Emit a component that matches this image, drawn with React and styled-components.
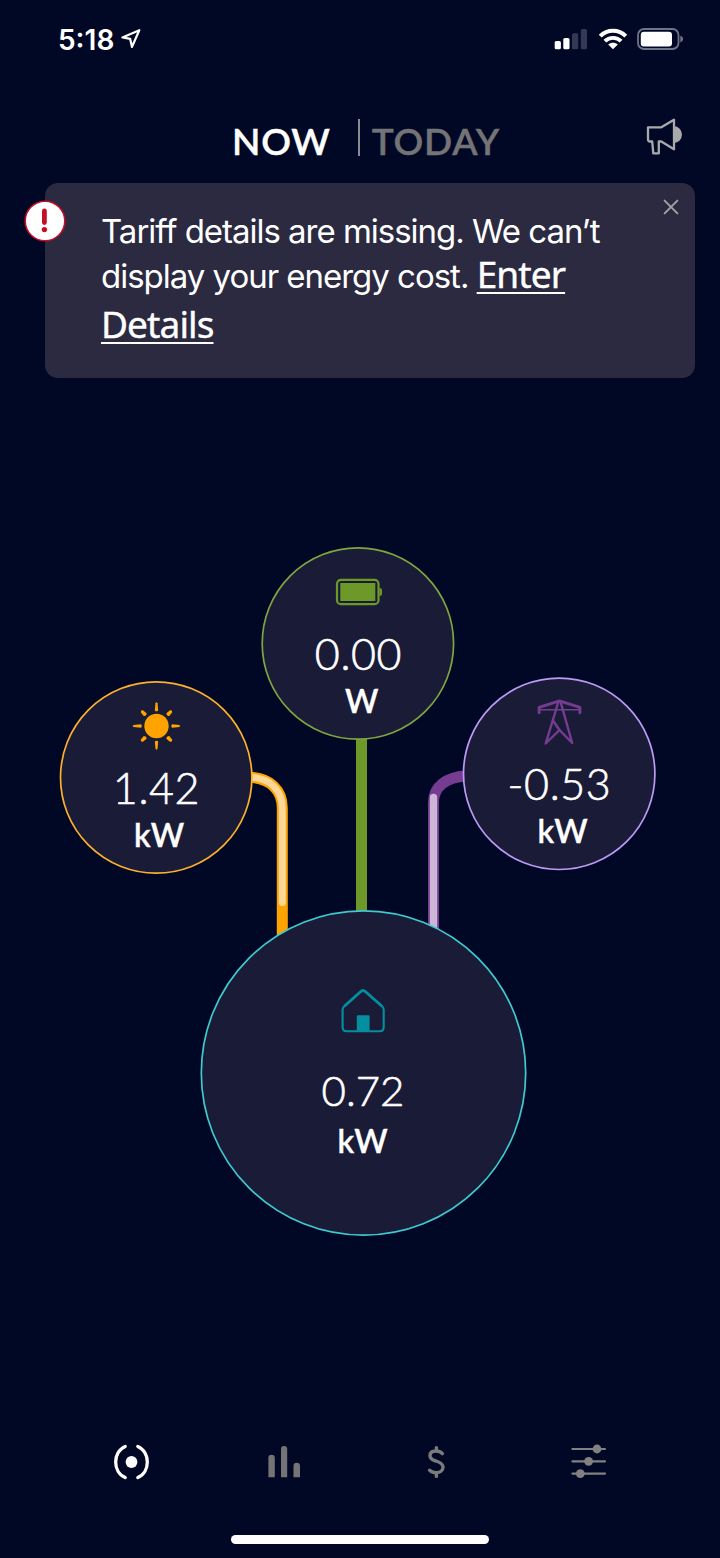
import React from 'react'
import styled, { createGlobalStyle } from 'styled-components'

const App = () => {
  return (
    <Screen>
      <GlobalStyle />
      <StatusBar>
        <Clock>
          <Time>5:18</Time>
          <svg width="22" height="22" viewBox="0 0 22 22">
            <path d="M19.3 2.2 2.4 9.4 10.2 10.9 12 18.9Z" fill="none" stroke="#fff" strokeWidth="2.2" strokeLinejoin="round" />
          </svg>
        </Clock>
        <Indicators>
          <svg width="33" height="22" viewBox="0 0 33 22">
            <rect x="0.7" y="13" width="6.2" height="8.3" rx="1.6" fill="#fff" />
            <rect x="9.3" y="10" width="6.2" height="11.3" rx="1.6" fill="#fff" />
            <rect x="18" y="5.2" width="6.2" height="16.1" rx="1.6" fill="#343855" />
            <rect x="26.8" y="1" width="6.2" height="20.3" rx="1.6" fill="#343855" />
          </svg>
          <svg width="30" height="22" viewBox="0 0 30 22">
            <path d="M2.2 8.2C9.3 1 20.7 1 27.8 8.2" fill="none" stroke="#fff" strokeWidth="4" />
            <path d="M6.9 13.2C11.3 8.7 18.7 8.7 23.1 13.2" fill="none" stroke="#fff" strokeWidth="3.9" />
            <path d="M15 21.3 10.2 16.6C12.8 14.1 17.2 14.1 19.8 16.6Z" fill="#fff" />
          </svg>
          <svg width="47" height="22" viewBox="0 0 47 22">
            <rect x="1" y="1" width="40.5" height="20" rx="6" fill="none" stroke="#70748a" strokeWidth="1.8" />
            <rect x="3.8" y="3.7" width="31.2" height="14.7" rx="3.2" fill="#fff" />
            <path d="M43.3 7.8C47 8.8 47 13.4 43.3 14.4Z" fill="#70748a" />
          </svg>
        </Indicators>
      </StatusBar>

      <Header>
        <Tabs>
          <Tab $active>NOW</Tab>
          <Divider />
          <Tab>TODAY</Tab>
        </Tabs>
        <svg width="37" height="38" viewBox="0 0 37 38">
          <path
            d="M2 9.3H15.3L28 1.7V31.3L15.3 23.5H12.8V35.3H7.3L6.2 23.5H4Q2 23.5 2 21.5Z"
            fill="none" stroke="#a9a9ab" strokeWidth="2.3" strokeLinejoin="round"
          />
          <path d="M28 8.3A8 8.3 0 0 1 28 24.9Z" fill="#a9a9ab" />
        </svg>
      </Header>

      <Alert>
        <Warning>
          <svg width="42" height="42" viewBox="0 0 42 42">
            <circle cx="21" cy="21" r="19.8" fill="#fff" stroke="#c40d26" strokeWidth="1.6" />
            <path d="M20.4 11V22.5" stroke="#c40d26" strokeWidth="4.8" strokeLinecap="round" />
            <circle cx="20.4" cy="29.6" r="2.7" fill="#c40d26" />
          </svg>
        </Warning>
        <Message>
          <Line $height="45px">Tariff details are missing. We can’t</Line>
          <Line $height="50px">
            display your energy cost. <Details>Enter</Details>
          </Line>
          <Line $height="50px"><Details>Details</Details></Line>
        </Message>
        <Close>
          <svg width="16" height="16" viewBox="0 0 16 16">
            <path d="M1.6 1.6 14.4 14.4M14.4 1.6 1.6 14.4" stroke="#a3a2a8" strokeWidth="1.9" strokeLinecap="round" />
          </svg>
        </Close>
      </Alert>

      <Flow>
        <Pipes viewBox="0 378 720 1046">
          <g fill="none" strokeWidth="11">
            <path d="M250 777.3C270 778 282.3 790 282.3 808V945" stroke="#ffa300" />
            <path d="M250 777.3C270 778 282.3 790 282.3 808V902.5" stroke="#ffd796" strokeWidth="7" strokeLinecap="round" />
            <path d="M361.5 735V915" stroke="#6c9928" />
            <path d="M466 776C446 777 433.5 787 433.5 802V945" stroke="#763c91" />
            <path d="M433.5 797.5V945" stroke="#ccb5d6" strokeWidth="7.4" strokeLinecap="round" />
          </g>
          <g fill="#1a1c37" strokeWidth="1.7">
            <circle cx="357.9" cy="643.5" r="95.7" stroke="#7ea640" />
            <circle cx="156.2" cy="777.5" r="95.7" stroke="#fdb02c" />
            <circle cx="559.2" cy="773.8" r="95.7" stroke="#bd9af6" />
            <circle cx="363.5" cy="1073" r="162.2" stroke="#3fc9d0" />
          </g>
        </Pipes>

        <Node $x={262} $y={169} $size={193}>
          <Icon $top={31}>
            <svg width="48" height="28" viewBox="0 0 48 28">
              <rect x="2" y="1.8" width="41.5" height="24.4" rx="4" fill="none" stroke="#6c9928" strokeWidth="2.2" />
              <rect x="5.3" y="5" width="35" height="18" fill="#6c9928" />
              <path d="M44.5 10Q47 10 47 12V16Q47 18 44.5 18Z" fill="#6c9928" />
            </svg>
          </Icon>
          <Value $gap={22}>0.00</Value>
          <Unit $shift={7}>W</Unit>
        </Node>

        <Node $x={60} $y={303} $size={193}>
          <Icon $top={20}>
            <svg width="50" height="50" viewBox="-24.5 -25 50 50">
              <circle r="12.2" fill="#ffa300" />
              <g fill="#ffa300">
                {[0, 90, 180, 270].map((angle) => (
                  <path key={angle} transform={`rotate(${angle})`} d="M-1.7-15.5Q0-13.8 1.7-15.5L1-22.8Q0-24.6-1-22.8Z" />
                ))}
                {[45, 135, 225, 315].map((angle) => (
                  <path key={angle} transform={`rotate(${angle})`} d="M-2-16Q0-14 2-16L1.5-20.6Q0-22.8-1.5-20.6Z" />
                ))}
              </g>
            </svg>
          </Icon>
          <Value $gap={11}>1.42</Value>
          <Unit $shift={6}>kW</Unit>
        </Node>

        <Node $x={463} $y={299} $size={193}>
          <Icon $top={20}>
            <svg width="46" height="48" viewBox=".5 -1.5 46 48">
              <g fill="none" stroke="#763c91" strokeWidth="2.4" strokeLinejoin="round" strokeLinecap="round">
                <path d="M2.6 14.3V8.8L23 2.4 43.4 8.8V14.3" strokeWidth="2.9" />
                <path d="M3 11.3H43" strokeWidth="1.6" />
                <path d="M22 3 9.2 45 23 31.5 35.7 44.5 24 3" />
                <path d="M16.6 22.2 23 31.5" />
              </g>
            </svg>
          </Icon>
          <Value $gap={13}>-0.53</Value>
          <Unit $shift={7}>kW</Unit>
        </Node>

        <Node $x={200} $y={532} $size={326}>
          <Icon $top={78}>
            <svg width="46" height="46" viewBox="-.3 -.3 46 46">
              <path
                d="M2.3 39V21.5Q2.3 19.5 4 18L20.5 3.2Q22.8 1.3 25 3.2L41.7 18Q43.4 19.5 43.4 21.5V39Q43.4 43 39.4 43H6.3Q2.3 43 2.3 39Z"
                fill="none" stroke="#058da0" strokeWidth="2.1"
              />
              <path d="M4 18 20.5 3.2Q22.8 1.3 25 3.2L41.7 18" fill="none" stroke="#058da0" strokeWidth="2.7" />
              <rect x="16.5" y="27" width="12.8" height="16" rx="1" fill="#058da0" />
            </svg>
          </Icon>
          <Value $gap={30} $size="42px">0.72</Value>
          <Unit $top={4}>kW</Unit>
        </Node>
      </Flow>

      <NavBar>
        <NavItem>
          <svg width="38" height="38" viewBox="-19.5 -19 38 38">
            <circle r="5.9" fill="#fff" />
            <path d="M-6.3-15.6C-19-10-19 10-6.3 15.6M6.3-15.6C19-10 19 10 6.3 15.6" fill="none" stroke="#fff" strokeWidth="3.3" strokeLinecap="round" />
          </svg>
        </NavItem>
        <NavItem>
          <svg width="38" height="38" viewBox="-19 -19 38 38">
            <g fill="#747476">
              <path d="M-15.6 15.3V-4A3.2 3.2 0 0 1-9.2-4V15.3Z" />
              <path d="M-3-13A3.1 3.1 0 0 1 3.2-13V15.3H-3Z" />
              <path d="M9.5 4A3.2 3.2 0 0 1 16 4V15.3H9.5Z" />
            </g>
          </svg>
        </NavItem>
        <NavItem>
          <svg width="38" height="38" viewBox="-19 -19 38 38">
            <path
              d="M6.4-8.4C4.8-10.2 2.8-11-.2-11-4-11-6-9.2-6-6.3-6-3.2-3.6-2 0-1 4.4.4 7 1.7 7 5.2 7 8.6 4 10.6.4 10.6-2.4 10.6-4.6 9.9-6.4 8.2M.4-14.4V-11M.4 11V14.4"
              fill="none" stroke="#7b7b7c" strokeWidth="3.4" strokeLinecap="round"
            />
          </svg>
        </NavItem>
        <NavItem>
          <svg width="38" height="38" viewBox="-19 -19 38 38">
            <path d="M-16.6-13H16M-16.6-.7H16M-16.6 11.6H16" stroke="#818182" strokeWidth="2.2" strokeLinecap="round" />
            <g fill="#818182">
              <circle cx="8" cy="-13" r="4.4" />
              <circle cx="-.4" cy="-.7" r="4.4" />
              <circle cx="-8.7" cy="11.6" r="4.4" />
            </g>
          </svg>
        </NavItem>
      </NavBar>
      <HomeIndicator />
    </Screen>
  )
}

const GlobalStyle = createGlobalStyle`
    * {
      box-sizing: border-box;
    }
    body {
      margin: 0;
      background-color: #010826;
    }
    svg {
      display: block;
      flex-shrink: 0;
    }
`;

const Screen = styled.div`
    display: flex;
    flex-direction: column;
    width: 720px;
    height: 1558px;
    overflow: hidden;
    background-color: #010826;
    color: #FFFFFF;
    font-family: Lato, "Open Sans", sans-serif;
`;

const StatusBar = styled.div`
    display: flex;
    justify-content: space-between;
    align-items: center;
    height: 78px;
    padding: 0 36px 0 58px;
`;

const Clock = styled.div`
    display: flex;
    align-items: center;
    gap: 6px;
`;

const Time = styled.div`
    padding-top: 2px;
    font-family: Inter, sans-serif;
    font-size: 28px;
    font-weight: 600;
    line-height: 34px;
`;

const Indicators = styled.div`
    display: flex;
    align-items: center;
    gap: 9.5px;
    svg:first-child {
      margin-right: 1px;
    }
`;

const Header = styled.div`
    display: flex;
    justify-content: space-between;
    height: 105px;
    padding: 40px 37px 0 232px;
`;

const Tabs = styled.div`
    display: flex;
    align-items: flex-start;
`;

const Tab = styled.div`
    color: ${({ $active }) => ($active ? '#FFFFFF' : '#747476')};
    font-size: 37px;
    font-weight: 600;
    line-height: 46px;
    letter-spacing: 0.8px;
    -webkit-text-stroke: 0.4px;
`;

const Divider = styled.div`
    width: 1.5px;
    height: 37px;
    margin: 1px 12px 0 27.5px;
    background-color: #8b8b8d;
`;

const Alert = styled.div`
    position: relative;
    display: flex;
    width: 650px;
    height: 195px;
    margin-left: 45px;
    padding: 26px 0 0 56px;
    border-radius: 13px;
    background-color: #2b2a41;
`;

const Warning = styled.div`
    position: absolute;
    top: 17px;
    left: -21px;
`;

const Message = styled.div`
    font-family: Inter, sans-serif;
    font-size: 33px;
    font-weight: 400;
`;

const Line = styled.div`
    height: ${({ $height }) => $height};
    line-height: 45px;
    letter-spacing: -1.02px;
    white-space: nowrap;
`;

const Details = styled.a`
    font-family: "Noto Sans", sans-serif;
    font-size: 37px;
    font-weight: 400;
    line-height: 1;
    letter-spacing: -0.9px;
    text-decoration: underline;
    text-decoration-thickness: 2px;
    text-underline-offset: 4px;
    -webkit-text-stroke: 0.4px #FFFFFF;
`;

const Close = styled.div`
    position: absolute;
    top: 16px;
    right: 16px;
`;

const Flow = styled.div`
    position: relative;
    height: 1046px;
`;

const Pipes = styled.svg`
    width: 720px;
    height: 1046px;
`;

const Node = styled.div`
    position: absolute;
    top: ${({ $y }) => $y}px;
    left: ${({ $x }) => $x}px;
    display: flex;
    flex-direction: column;
    align-items: center;
    width: ${({ $size }) => $size}px;
    height: ${({ $size }) => $size}px;
    border-radius: 50%;
`;

const Icon = styled.div`
    margin-top: ${({ $top }) => $top}px;
`;

const Value = styled.div`
    margin-top: ${({ $gap }) => $gap}px;
    font-size: ${({ $size }) => $size || '43px'};
    font-weight: 300;
    line-height: 52px;
    letter-spacing: ${({ $size }) => ($size ? '0' : '0.6px')};
    -webkit-text-stroke: 0.6px #FFFFFF;
`;

const Unit = styled.div`
    margin-top: ${({ $top }) => $top || 0}px;
    padding-left: ${({ $shift }) => $shift || 0}px;
    font-size: 32px;
    font-weight: 600;
    line-height: 42px;
    letter-spacing: 0.8px;
    -webkit-text-stroke: 0.3px #FFFFFF;
`;

const NavBar = styled.div`
    display: flex;
    width: 610px;
    height: 76px;
    margin: 0 auto;
`;

const NavItem = styled.div`
    display: flex;
    flex: 1;
    align-items: center;
    justify-content: center;
`;

const HomeIndicator = styled.div`
    width: 258px;
    height: 9px;
    margin: 35px 0 0 231px;
    border-radius: 5px;
    background-color: #FFFFFF;
`;

export default App
